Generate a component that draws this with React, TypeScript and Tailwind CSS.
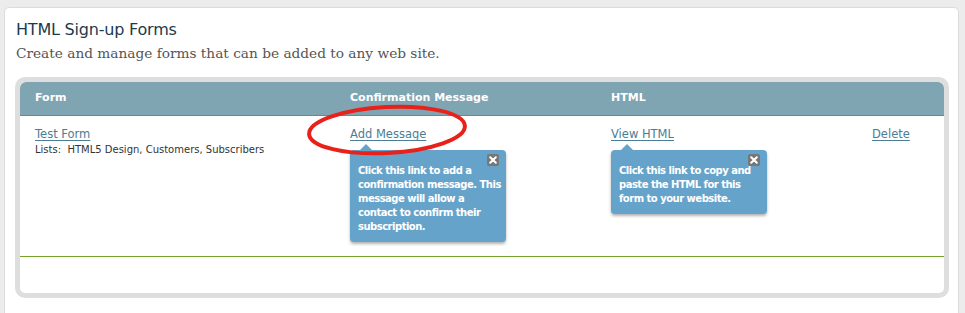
import React from 'react';

const Tip = ({ lines, className }: { lines: string[]; className: string }) => (
  <div className={`absolute w-[156px] rounded-[4px] bg-[#66a3ca] px-2 pt-[14px] pb-[8px] shadow-[0_2px_3px_rgba(0,0,0,0.3)] ${className}`}>
    <div className="absolute -top-[6px] left-[10px] h-0 w-0 border-x-[6px] border-b-[6px] border-x-transparent border-b-[#66a3ca]" />
    <div className="absolute right-[7px] top-[4px] flex h-[12px] w-[12px] items-center justify-center rounded-[2px] bg-[#777]">
      <svg width="8" height="8" viewBox="0 0 8 8">
        <path d="M1.2 1.2 L6.8 6.8 M6.8 1.2 L1.2 6.8" stroke="#fff" strokeWidth="2" strokeLinecap="round" />
      </svg>
    </div>
    <div className="whitespace-nowrap text-[10px] font-bold leading-[14px] tracking-[-0.5px] text-white">
      {lines.map((l) => (
        <div key={l}>{l}</div>
      ))}
    </div>
  </div>
);

export default function App() {
  return (
    <div className="h-[313px] w-[965px] overflow-hidden bg-[#ececec] pt-[7px] pl-[4px] font-['DejaVu_Sans',sans-serif]">
      <div className="h-[320px] w-[955px] rounded-[5px] border border-[#dcdcdc] bg-white px-[10px] pt-[12px]">
        <h1 className="pl-[1px] text-[16px] leading-[20px] tracking-[-0.2px] text-[#1b3a4b]">HTML Sign-up Forms</h1>
        <p className="mt-[3px] pl-[1px] font-['DejaVu_Serif',serif] text-[13.7px] leading-[20px] text-[#555]">
          Create and manage forms that can be added to any web site.
        </p>

        <div className="relative mt-[14px] h-[221px] w-[934px] rounded-[10px] border-[5px] border-[#dedede] bg-white">
          <div className="overflow-hidden rounded-t-[6px]">
            <div className="flex h-[34px] items-center border-b border-[#6e9c22] bg-[#7fa5b3] text-[11px] font-bold text-white">
              <div className="w-[315px] pl-[15px]">Form</div>
              <div className="w-[261px] pl-[15px]">Confirmation Message</div>
              <div className="w-[261px] pl-[15px]">HTML</div>
              <div className="flex-1" />
            </div>
          </div>
          <div className="flex h-[141px] border-b border-[#77a22a] pt-[10px] text-[11.5px] leading-[16px]">
            <div className="w-[315px] pl-[15px]">
              <a className="text-[#4b7d94] underline underline-offset-2">Test Form</a>
              <div className="text-[10px] leading-[16px] text-[#333]">Lists:&nbsp; HTML5 Design, Customers, Subscribers</div>
            </div>
            <div className="w-[261px] pl-[15px]">
              <a className="text-[#4b7d94] underline underline-offset-2">Add Message</a>
            </div>
            <div className="w-[261px] pl-[15px]">
              <a className="text-[#4b7d94] underline underline-offset-2">View HTML</a>
            </div>
            <div className="flex-1 pl-[15px]">
              <a className="text-[#4b7d94] underline underline-offset-2">Delete</a>
            </div>
          </div>

          <Tip
            className="left-[330px] top-[68px]"
            lines={['Click this link to add a', 'confirmation message. This', 'message will allow a', 'contact to confirm their', 'subscription.']}
          />
          <Tip
            className="left-[591px] top-[68px]"
            lines={['Click this link to copy and', 'paste the HTML for this', 'form to your website.']}
          />

          <svg className="absolute left-[281px] top-[17px]" width="172" height="62" viewBox="0 0 172 62">
            <ellipse cx="86" cy="31" rx="78" ry="23" fill="none" stroke="#e8221b" strokeWidth="4" transform="rotate(-3 86 31)" />
          </svg>
        </div>
      </div>
    </div>
  );
}
